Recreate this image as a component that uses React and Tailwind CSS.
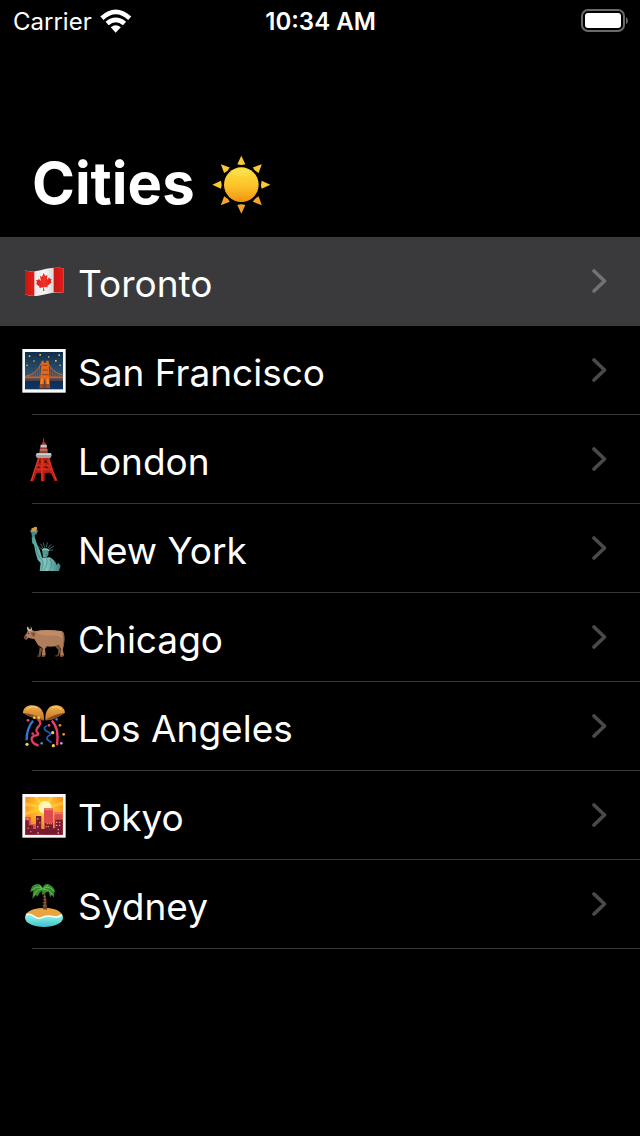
import React from "react";

function Sun() {
  return (
    <svg viewBox="570 25 180 180" className="h-15 w-15 shrink-0 overflow-visible" role="img" aria-label="Sun">
      <defs>
        <linearGradient id="sun-disc" x1="0" y1="0" x2="0" y2="1">
          <stop offset="0" stopColor="#fddc3c" />
          <stop offset="0.5" stopColor="#fcc62b" />
          <stop offset="1" stopColor="#f3930f" />
        </linearGradient>
      </defs>
      {[0, 45, 90, 135, 180, 225, 270, 315].map((a) => (
        <path key={a} d="M661 33 L673 59 Q661 63 649 59 Z" fill={a > 100 && a < 260 ? "#f6a52a" : "#fbc936"} transform={`rotate(${a} 661 120)`} />
      ))}
      <circle cx="661" cy="120" r="52" fill="url(#sun-disc)" />
      <ellipse cx="661" cy="84" rx="30" ry="12" fill="#fff07a" opacity="0.25" />
    </svg>
  );
}

function Flag() {
  return (
    <g>
      <defs>
        <linearGradient id="flag-shade" x1="0" x2="1">
          <stop offset="0" stopColor="#000" stopOpacity="0.15" />
          <stop offset="0.18" stopColor="#000" stopOpacity="0" />
          <stop offset="0.5" stopColor="#fff" stopOpacity="0.1" />
          <stop offset="0.75" stopColor="#000" stopOpacity="0.12" />
          <stop offset="1" stopColor="#000" stopOpacity="0" />
        </linearGradient>
      </defs>
      <path d="M45 46 Q60 52 80 48 C105 43 130 35 160 40 L160 114 C135 108 110 118 85 122 Q60 125 45 118 Z" fill="#f5f5f5" />
      <path d="M45 46 Q58 51 73 49 L73 123 Q57 123 45 118 Z" fill="#e31b17" />
      <path d="M131 39 Q146 37 160 40 L160 114 Q146 111 131 112 Z" fill="#e31b17" />
      <path d="M101 54 L106 63 L112 60 L111 74 L118 67 L120 72 L125 71 L122 79 L125 82 L112 93 L113 97 L102 96 L103 108 L99 108 L100 97 L88 99 L89 95 L78 86 L81 82 L78 75 L84 76 L86 71 L93 78 L90 63 L96 65 Z" fill="#ee1c13" />
      <path d="M45 46 Q60 52 80 48 C105 43 130 35 160 40 L160 114 C135 108 110 118 85 122 Q60 125 45 118 Z" fill="url(#flag-shade)" />
    </g>
  );
}

function Bridge() {
  return (
    <g>
      <defs>
        <linearGradient id="night" x1="0" y1="0" x2="0" y2="1">
          <stop offset="0" stopColor="#102e4c" />
          <stop offset="0.65" stopColor="#355873" />
          <stop offset="0.77" stopColor="#523f45" />
          <stop offset="0.78" stopColor="#102d55" />
          <stop offset="1" stopColor="#0e3568" />
        </linearGradient>
      </defs>
      <rect x="37" y="27" width="130" height="131" fill="#f8fbfc" />
      <rect x="45" y="36" width="114" height="112" fill="url(#night)" />
      <path d="M46 109 Q78 106 96 66 M112 66 Q128 99 158 105 M104 70 L98 107 M108 70 L114 107" fill="none" stroke="#cf6a31" strokeWidth="3" />
      <path d="M55 106V112 M62 102V112 M69 98V112 M76 92V112 M83 86V112 M89 79V112 M121 84V112 M128 91V112 M135 97V112 M142 101V112 M149 103V112" stroke="#a95d40" strokeWidth="2" />
      <path d="M45 112H159" stroke="#d05d24" strokeWidth="5" />
      <path d="M95 62 H101 V68 H109 V62 H116 L119 144 H106 V116 H103 V144 H89 Z" fill="#e56818" />
      <path d="M98 76H112 M97 90H114 M96 104H116" stroke="#853f27" strokeWidth="3" />
      <path d="M90 144 L93 116 H99 L96 144 Z M110 116H116L119 144H112Z" fill="#fb982b" opacity="0.8" />
      <path d="M89 132H104V146H88Z M106 132H119V146H106Z" fill="#7b351c" opacity="0.7" />
      <g fill="#d9c84b">
        <rect x="56" y="46" width="5" height="5" /><rect x="88" y="42" width="5" height="5" /><rect x="70" y="61" width="4" height="4" /><rect x="114" y="49" width="4" height="4" /><rect x="135" y="60" width="5" height="5" /><rect x="145" y="43" width="5" height="5" /><rect x="148" y="74" width="4" height="4" /><rect x="49" y="74" width="4" height="4" />
      </g>
    </g>
  );
}

function Tower() {
  return (
    <g>
      <path d="M101 25V40" stroke="#c33a2b" strokeWidth="3" />
      <path d="M97 37H106L108 45H95Z" fill="#b43022" />
      <path d="M92 44H110L111 53H91Z" fill="#c3c8c6" />
      <path d="M91 53H111L114 70H87Z" fill="#9b3b32" />
      <path d="M89 60H113" stroke="#b9aaa4" strokeWidth="3" />
      <path d="M85 82 L74 124 L60 154 H70 L80 130 Q86 126 93 130 V154 H104 V130 Q118 125 124 132 L134 153 H143 L129 124 L117 82 Z" fill="#b91e12" />
      <path d="M86 84 L72 126 L64 153 M97 84 L96 153 M116 84 L128 123 L139 151" stroke="#e2321f" strokeWidth="4" fill="none" />
      <path d="M83 92 L105 103 M106 91 L120 100 M79 106 L95 115 M101 104 L123 116 M76 119H125 M81 106H121 M84 94H117 M101 117L120 105" stroke="#d93a28" strokeWidth="2.5" />
      <path d="M86 96L90 90L93 98Z M101 97L108 90L113 98Z M82 111L86 107L91 115Z M103 112L108 107L116 115Z" fill="#3f0905" />
      <path d="M80 70H123L125 77L121 84H81L77 77Z" fill="#98a6a8" />
      <path d="M80 70H123L124 75H79Z" fill="#ccd5d6" />
    </g>
  );
}

function Liberty() {
  return (
    <g>
      <defs>
        <linearGradient id="patina" x1="0" x2="1">
          <stop offset="0" stopColor="#4f9f9b" />
          <stop offset="0.5" stopColor="#83c8bd" />
          <stop offset="1" stopColor="#3c7f83" />
        </linearGradient>
      </defs>
      <path d="M64 30 Q62 24 70 23 Q76 18 81 22 Q83 27 78 33 H65Z" fill="#e39a25" />
      <path d="M61 32 H83 L80 42 L74 45 L77 70 L67 70 L65 43Z" fill="#4e8584" />
      <path d="M61 33H83" stroke="#96b9b2" strokeWidth="3" />
      <path d="M65 54 L74 52 L80 70 L90 92 L96 113 L120 112 Q136 122 140 135 L145 128 L152 137 L147 153 H89 L92 129 L83 119 Q75 97 72 75 L67 69Z" fill="url(#patina)" />
      <path d="M96 88 Q105 80 116 89 L115 105 Q109 115 99 112 Z" fill="#5a9d97" />
      <path d="M97 88L86 80 M99 84L91 71 M104 83L100 68 M109 82L112 67 M113 85L124 73 M116 88L132 78 M117 91L130 90" stroke="#6a9994" strokeWidth="2" />
      <path d="M96 90Q106 84 117 91" stroke="#91c5ba" strokeWidth="4" fill="none" />
      <path d="M103 96H106 M111 96H114 M106 104H112" stroke="#28575b" strokeWidth="2" />
      <path d="M92 115Q105 125 94 151 M110 115Q115 130 102 152 M120 117Q130 135 117 153 M77 78Q80 99 91 116" stroke="#397d7e" strokeWidth="2" fill="none" />
    </g>
  );
}

function Ox() {
  return (
    <g>
      <path d="M82 108 L89 113 L86 134 L81 140 H91 L97 116 Z M135 109 L145 120 L144 133 L135 139 H145 L151 126 L149 105Z" fill="#765039" />
      <path d="M42 80 L50 70 L54 60 Q62 55 70 62 Q80 66 91 61 Q122 58 155 63 Q164 66 163 82 L162 104 L158 119 L162 135 L159 140 H150 L152 116 L147 105 Q130 112 111 109 L105 117 L107 134 L103 140 H95 L98 115 L84 105 L73 87 Q62 86 56 83 L49 89 Q42 88 42 80Z" fill="#b07c5a" />
      <path d="M74 64Q106 57 155 65Q162 72 158 85Q144 72 118 77Q92 79 74 64Z" fill="#ca9773" opacity="0.6" />
      <path d="M157 67Q166 83 159 109" stroke="#835b41" strokeWidth="3" fill="none" />
      <path d="M54 62Q47 54 54 49Q54 56 62 59Q64 55 61 49Q69 55 64 64Z" fill="#c8bbaa" />
      <path d="M63 66L77 69L72 81L65 75Z" fill="#80543f" />
      <path d="M42 79L49 77L51 84L48 89Q42 87 42 80Z" fill="#684638" />
      <circle cx="55" cy="70" r="1.8" fill="#2b1912" />
      <path d="M82 138H91 M96 138H106 M136 137H144 M151 138H160" stroke="#4c352a" strokeWidth="3" />
    </g>
  );
}

function Confetti() {
  return (
    <g>
      <defs>
        <linearGradient id="ball" x1="0" y1="0" x2="0" y2="1">
          <stop offset="0" stopColor="#efb04d" />
          <stop offset="1" stopColor="#c77525" />
        </linearGradient>
      </defs>
      <path d="M39 54C38 28 75 24 91 40Q103 51 102 76Q79 75 39 54Z" fill="url(#ball)" />
      <path d="M165 53C164 28 126 24 114 42Q105 53 106 76Q129 76 165 53Z" fill="url(#ball)" />
      <path d="M39 54Q76 57 102 76Q78 78 39 54Z M165 53Q130 57 106 76Q134 76 165 53Z" fill="#8a4a1b" />
      <path d="M50 43Q66 31 82 38 M124 39Q141 31 154 44" stroke="#ffd27c" strokeWidth="3" fill="none" />
      <path d="M69 77Q49 101 50 136" stroke="#3478df" strokeWidth="7" fill="none" />
      <path d="M83 73Q97 82 87 93Q73 105 84 115Q88 121 72 122Q60 129 68 141Q76 151 86 151" stroke="#df3e63" strokeWidth="7" fill="none" />
      <path d="M111 93Q97 97 107 107Q124 114 121 119Q107 126 112 134L125 143" stroke="#245fc2" strokeWidth="5" fill="none" />
      <path d="M125 77Q148 98 141 151" stroke="#e53e67" strokeWidth="7" fill="none" />
      <g fill="#ef4e79"><circle cx="54" cy="76" r="4" /><circle cx="117" cy="91" r="4" /><circle cx="154" cy="145" r="4" fill="#df91d1" /></g>
      <g fill="#f6cc45"><circle cx="73" cy="68" r="4" /><circle cx="86" cy="68" r="4" /><circle cx="51" cy="148" r="5" /><circle cx="128" cy="113" r="5" /><circle cx="130" cy="152" r="5" /></g>
      <circle cx="140" cy="73" r="4" fill="#377ce5" /><circle cx="95" cy="145" r="4" fill="#4387ec" /><circle cx="150" cy="91" r="4" fill="#e6893e" /><circle cx="161" cy="118" r="4" fill="#e89744" /><circle cx="68" cy="116" r="4" fill="#c44b51" />
    </g>
  );
}

function Sunset() {
  return (
    <g>
      <defs>
        <radialGradient id="dusk" cx="0.5" cy="0.28" r="0.85">
          <stop offset="0" stopColor="#fff4a0" />
          <stop offset="0.2" stopColor="#ffc72f" />
          <stop offset="0.6" stopColor="#fb941f" />
          <stop offset="1" stopColor="#ee4a25" />
        </radialGradient>
      </defs>
      <rect x="37" y="27" width="130" height="131" fill="#fffafa" />
      <rect x="46" y="36" width="113" height="113" fill="url(#dusk)" />
      <path d="M105 68L70 36H83Z M105 68L118 36H132Z M105 68L46 52V63Z M105 68L159 49V60Z M105 68L46 82V92Z" fill="#ffe23d" opacity="0.5" />
      <circle cx="105" cy="67" r="19" fill="#fff6b5" />
      <path d="M46 96H62V118H78V149H46Z M102 69H129V149H102Z M133 82H158V149H133Z" fill="#dc4c4f" />
      <path d="M103 69H129V76H103Z M133 82H158V88H133Z" fill="#f5736b" />
      <path d="M46 106H56V121H69V132H78V93H94V132H105V114H129V130H136V104H158V149H46Z" fill="#761c31" />
      <g fill="#f2a18b">
        <path d="M51 100h4v5h-4z M82 99h3v5h-3z M88 111h3v4h-3z M82 123h3v5h-3z M53 128h3v4h-3z M61 138h3v4h-3z M138 110h4v4h-4z M147 110h4v4h-4z M138 119h4v4h-4z M147 119h4v4h-4z M143 132h4v4h-4z M143 142h4v4h-4z M82 142h4v4h-4z" />
      </g>
      <path d="M96 112V130 M110 116H128 M107 125H117" stroke="#db9551" strokeWidth="4" strokeDasharray="4 2" />
    </g>
  );
}

function Island() {
  return (
    <g>
      <defs>
        <linearGradient id="sea" x1="0" y1="0" x2="0" y2="1">
          <stop offset="0" stopColor="#c9fff0" />
          <stop offset="0.55" stopColor="#77e6e2" />
          <stop offset="1" stopColor="#41bdca" />
        </linearGradient>
      </defs>
      <ellipse cx="102" cy="128" rx="57" ry="28" fill="url(#sea)" />
      <path d="M48 119C54 106 75 100 102 99C132 99 151 107 156 119Q143 130 130 124Q112 121 98 127Q83 134 72 124Q60 116 48 119Z" fill="#e9a33f" />
      <path d="M48 119Q61 115 72 124Q84 134 98 127Q113 120 130 125Q145 129 156 119" stroke="#effff2" strokeWidth="5" fill="none" />
      <path d="M99 50Q105 73 98 102L111 104Q110 75 105 50Z" fill="#6e4324" />
      <path d="M99 65H107 M99 74H109 M98 83H109 M98 92H109" stroke="#a7754b" strokeWidth="2" />
      <path d="M98 38Q88 22 73 29Q63 33 61 52L70 45L67 72L78 59L81 65L90 52L96 48L97 61L106 53L116 49L120 66L126 60L132 68L132 50L136 54Q133 34 118 29Q104 23 98 38Z" fill="#318c32" />
      <path d="M98 42Q82 28 65 47 M98 42Q80 41 72 61 M99 43Q112 28 132 48 M101 43Q119 44 126 59 M95 40L88 29 M105 38L114 29" stroke="#72c04a" strokeWidth="3" fill="none" />
    </g>
  );
}

const cities = [
  { name: "Toronto", box: "36 12 132 132", Art: Flag, selected: true },
  { name: "San Francisco", box: "36 24 132 132", Art: Bridge },
  { name: "London", box: "36 21 132 132", Art: Tower },
  { name: "New York", box: "36 18 132 132", Art: Liberty },
  { name: "Chicago", box: "36 15 132 132", Art: Ox },
  { name: "Los Angeles", box: "36 27 132 132", Art: Confetti },
  { name: "Tokyo", box: "36 24 132 132", Art: Sunset },
  { name: "Sydney", box: "36 21 132 132", Art: Island },
];

function StatusBar() {
  return (
    <header className="grid h-[41px] grid-cols-3 items-center pr-3 pl-[13px] text-2xl">
      <div className="flex items-center gap-2">
        <span className="pt-0.5">Carrier</span>
        <svg viewBox="298 26 92 68" className="h-6 w-8" role="img" aria-label="Wi-Fi">
          <g fill="#fff">
            <path d="M299 47Q343 7 388 47L379 57Q343 24 308 57Z" />
            <path d="M314 62Q343 38 373 62L364 72Q343 55 323 72Z" />
            <path d="M329 78Q343 67 358 78L343 94Z" />
          </g>
        </svg>
      </div>
      <time className="pt-0.5 text-center font-semibold">10:34 AM</time>
      <svg viewBox="0 0 48 24" className="h-6 w-12 justify-self-end" role="img" aria-label="Battery full">
        <rect x="2" y="1" width="42" height="21" rx="6" fill="none" stroke="#69696b" strokeWidth="2" />
        <rect x="5" y="4" width="36" height="15" rx="3" fill="#fff" />
        <path d="M46 8Q48 9 48 11.500Q48 14 46 15Z" fill="#69696b" />
      </svg>
    </header>
  );
}

export default function App() {
  return (
    <div className="min-h-screen bg-black font-['Inter',sans-serif] text-white">
      <StatusBar />
      <main>
        <div className="flex h-49 items-end gap-4 px-8 pb-6">
          <h1 className="text-[58px] leading-15 font-bold">Cities</h1>
          <Sun />
        </div>
        <ul>
          {cities.map(({ name, box, Art, selected }) => (
            <li key={name}>
              <a href="#" aria-current={selected ? "true" : undefined} className={selected ? "block bg-[#3a3a3c]" : "block"}>
                <div className="flex h-22 items-center gap-3 pr-8 pl-[22px]">
                  <svg viewBox={box} className="h-11 w-11 shrink-0 overflow-visible" aria-hidden="true">
                    <Art />
                  </svg>
                  <span className="grow pt-1.5 text-[37px] leading-12">{name}</span>
                  <svg viewBox="0 0 16 24" className="h-6 w-4 shrink-0" fill="none" aria-hidden="true">
                    <path d="M2 2L12.500 12L2 22" stroke={selected ? "#727274" : "#4a4a4c"} strokeWidth="3.600" strokeLinecap="round" strokeLinejoin="round" />
                  </svg>
                </div>
                <div className={selected ? "h-px" : "ml-8 h-px bg-[#38383a]"} />
              </a>
            </li>
          ))}
        </ul>
      </main>
    </div>
  );
}
